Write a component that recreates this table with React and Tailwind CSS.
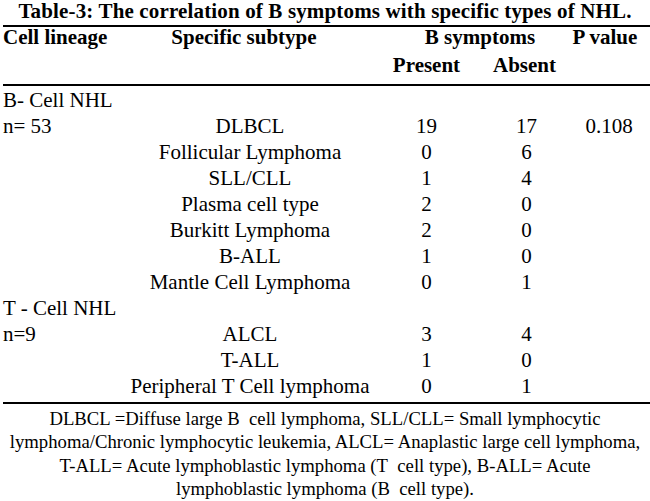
const rows = [
  { lineage: 'B- Cell NHL' },
  { lineage: 'n= 53', subtype: 'DLBCL', present: '19', absent: '17', p: '0.108' },
  { subtype: 'Follicular Lymphoma', present: '0', absent: '6' },
  { subtype: 'SLL/CLL', present: '1', absent: '4' },
  { subtype: 'Plasma cell type', present: '2', absent: '0' },
  { subtype: 'Burkitt Lymphoma', present: '2', absent: '0' },
  { subtype: 'B-ALL', present: '1', absent: '0' },
  { subtype: 'Mantle Cell Lymphoma', present: '0', absent: '1' },
  { lineage: 'T - Cell NHL' },
  { lineage: 'n=9', subtype: 'ALCL', present: '3', absent: '4' },
  { subtype: 'T-ALL', present: '1', absent: '0' },
  { subtype: 'Peripheral T Cell lymphoma', present: '0', absent: '1' },
];

const grid = 'grid grid-cols-[137px_220px_133px_67px_90px]';
const mid = 'flex justify-center whitespace-nowrap';

export default function App() {
  return (
    <div className="w-[650px] h-[501px] bg-white text-black font-['Liberation_Serif',serif] overflow-hidden">
      {/* title */}
      <div className="h-[25px] text-center font-bold text-[21px] leading-[22px] tracking-[0.15px] whitespace-nowrap">
        Table-3: The correlation of B symptoms with specific types of NHL.
      </div>

      <div className="ml-[3px] border-t-2 border-black">
        {/* header */}
        <div className={`${grid} font-bold text-[21px] border-b-2 border-black`}>
          <div className="h-[20px] leading-[20px] whitespace-nowrap">Cell lineage</div>
          <div className={`${mid} h-[20px] leading-[20px] pr-3`}>Specific subtype</div>
          <div className={`${mid} col-span-2 h-[20px] leading-[20px] pl-10`}>B symptoms</div>
          <div className={`${mid} h-[20px] leading-[20px]`}>P value</div>
          <div className="h-[37px]" />
          <div className="h-[37px]" />
          <div className={`${mid} h-[37px] leading-[37px]`}>Present</div>
          <div className={`${mid} h-[37px] leading-[37px] pr-1`}>Absent</div>
          <div className="h-[37px]" />
        </div>

        {/* body */}
        <div className={`${grid} text-[21px] leading-[26px] pt-[1px] pb-[3px] border-b-2 border-black`}>
          {rows.map((r, i) => (
            <div key={i} className="contents">
              <div className="h-[26px] whitespace-nowrap">{r.lineage}</div>
              <div className={`${mid} h-[26px]`}>{r.subtype}</div>
              <div className={`${mid} h-[26px]`}>{r.present}</div>
              <div className={`${mid} h-[26px]`}>{r.absent}</div>
              <div className={`${mid} h-[26px] pl-2`}>{r.p}</div>
            </div>
          ))}
        </div>
      </div>

      {/* footnote */}
      <div className="pt-[3px] text-center text-[18.7px] leading-[23.3px] whitespace-nowrap">
        <div>DLBCL =Diffuse large B&nbsp; cell lymphoma, SLL/CLL= Small lymphocytic</div>
        <div>lymphoma/Chronic lymphocytic leukemia, ALCL= Anaplastic large cell lymphoma,</div>
        <div>T-ALL= Acute lymphoblastic lymphoma (T&nbsp; cell type), B-ALL= Acute</div>
        <div>lymphoblastic lymphoma (B&nbsp; cell type).</div>
      </div>
    </div>
  );
}
